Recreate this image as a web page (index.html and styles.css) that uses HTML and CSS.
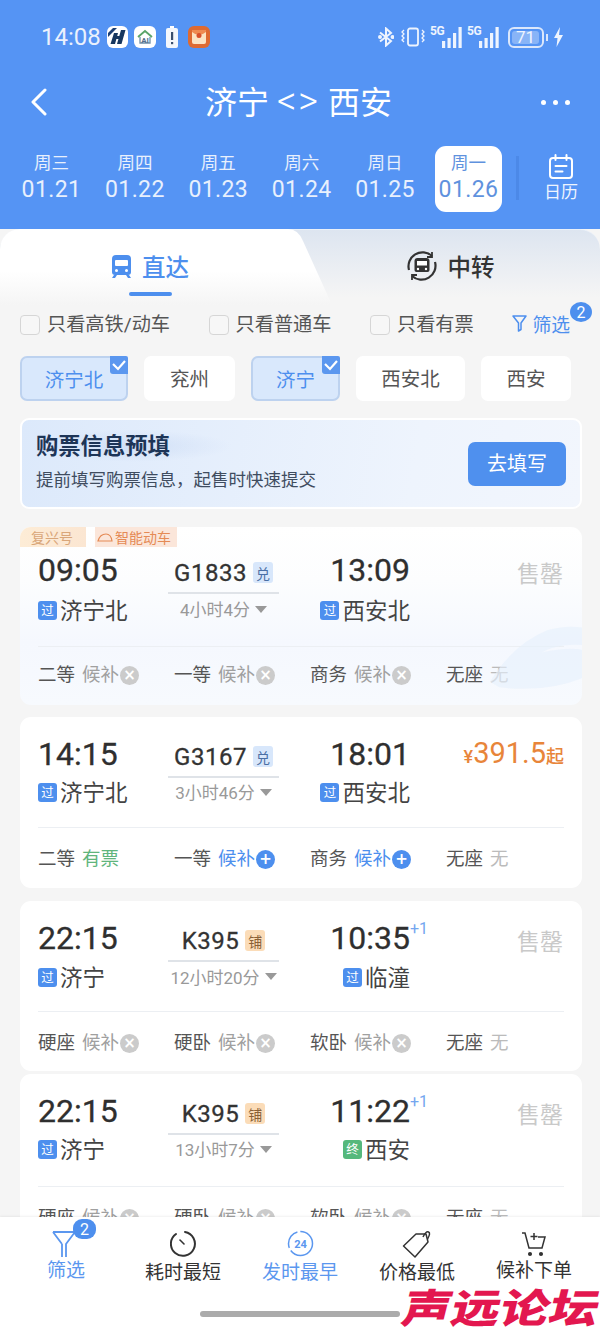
FILE: index.html
```html
<!DOCTYPE html>
<html lang="zh-CN">
<head>
<meta charset="utf-8">
<title>济宁 &lt;&gt; 西安</title>
<link rel="stylesheet" href="styles.css">
</head>
<body>
<div class="app">
  <header class="header">
    <div class="status">
      <span class="clock">14:08</span>
      <svg class="app-icon" width="21" height="22" viewBox="0 0 21 22"><rect width="21" height="22" rx="6" fill="#fff"/><path d="M1 7 6 2h4L1 11z" fill="#1c3f73"/><path d="M7 7h4l-3 11H3.500zM14 4h4.500l-4 14H10z" fill="#17375f"/><path d="M6 10h10v3H6z" fill="#17375f"/></svg>
      <svg class="app-icon" width="22" height="22" viewBox="0 0 22 22"><rect width="22" height="22" rx="6" fill="#fff"/><path d="M4 11 11 5l7 6" fill="none" stroke="#5aa469" stroke-width="1.800"/><path d="M6 11v6h10v-6" fill="none" stroke="#6f8fa8" stroke-width="1.300"/><text x="11" y="16.500" class="app-icon-text">AI</text></svg>
      <svg class="app-icon app-icon--wide" width="12" height="22" viewBox="0 0 12 22"><rect x="4" y="0" width="4" height="2" fill="#fff"/><rect y="2" width="12" height="20" rx="2" fill="#f4f7fc"/><rect x="5" y="6" width="2.200" height="8" fill="#3a4f6e"/><rect x="5" y="16" width="2.200" height="2.200" fill="#3a4f6e"/></svg>
      <svg class="app-icon app-icon--wide" width="22" height="22" viewBox="0 0 22 22"><rect width="22" height="22" rx="6" fill="#de6a32"/><rect x="4" y="4" width="14" height="14" rx="2" fill="#fbe3c4"/><path d="M4 6q7 6 14 0V5a1 1 0 0 0-1-1H5a1 1 0 0 0-1 1z" fill="#ef8b52"/><circle cx="11" cy="9.500" r="2.500" fill="#d8502c"/></svg>
      <span class="status-right">
        <svg width="16" height="20" viewBox="0 0 16 20" fill="none" stroke="#eef4fe" stroke-width="2"><path d="M2 5.500 13 14l-5 4.500V1.500L13 6 2 14.500"/><circle cx="2" cy="10" r="1" fill="#eef4fe"/><circle cx="14.500" cy="10" r="1" fill="#eef4fe"/></svg>
        <svg class="vib" width="24" height="20" viewBox="0 0 24 20" fill="none" stroke="#eef4fe" stroke-width="1.800"><rect x="7" y="1.500" width="10" height="17" rx="2"/><path d="M3 3l-2 2 2 2-2 2 2 2-2 2 2 2M21 3l2 2-2 2 2 2-2 2 2 2-2 2" stroke-width="1.300"/></svg>
        <span class="signal"><span class="signal-tag">5G</span><svg width="20" height="21" viewBox="0 0 20 21" fill="#eef4fe"><rect x="0" y="14" width="3.200" height="7"/><rect x="5.500" y="11" width="3.200" height="10"/><rect x="11" y="6" width="3.200" height="15"/><rect x="16.500" y="0" width="3.200" height="21"/></svg></span>
        <span class="signal"><span class="signal-tag">5G</span><svg width="20" height="21" viewBox="0 0 20 21" fill="#eef4fe"><rect x="0" y="14" width="3.200" height="7"/><rect x="5.500" y="11" width="3.200" height="10"/><rect x="11" y="6" width="3.200" height="15"/><rect x="16.500" y="0" width="3.200" height="21"/></svg></span>
        <span class="battery"><span class="battery-level">71</span></span>
        <span class="battery-tip"></span>
        <svg width="9" height="20" viewBox="0 0 9 20"><path d="M6 0 0 11h3.500L2.500 20 9 8H5z" fill="#eef4fe"/></svg>
      </span>
    </div>
    <div class="nav">
      <svg class="nav-back" width="18" height="28" viewBox="0 0 18 28"><path d="M15 2 3 14l12 12" fill="none" stroke="#fff" stroke-width="3" stroke-linecap="round" stroke-linejoin="round"/></svg>
      <h1 class="nav-title">济宁 <span class="nav-arrows">&lt;&gt;</span> 西安</h1>
      <span class="nav-more"><i></i><i></i><i></i></span>
    </div>
    <div class="dates">
      <div class="day"><span class="day-week">周三</span><span class="day-date">01.21</span></div>
      <div class="day"><span class="day-week">周四</span><span class="day-date">01.22</span></div>
      <div class="day"><span class="day-week">周五</span><span class="day-date">01.23</span></div>
      <div class="day"><span class="day-week">周六</span><span class="day-date">01.24</span></div>
      <div class="day"><span class="day-week">周日</span><span class="day-date">01.25</span></div>
      <div class="day day--active"><span class="day-week">周一</span><span class="day-date">01.26</span></div>
      <i class="dates-sep"></i>
      <div class="calendar">
        <svg width="26" height="25" viewBox="0 0 26 25" fill="none" stroke="#fff" stroke-width="2"><rect x="2" y="4" width="22" height="20" rx="3"/><path d="M7.500 1v5M18.500 1v5M7.500 12h11M7.500 17.500h7" stroke-linecap="round"/></svg>
        <span>日历</span>
      </div>
    </div>
  </header>

  <main class="sheet">
    <div class="tabs">
      <svg class="tab-shape" width="332" height="76" viewBox="0 0 332 76" preserveAspectRatio="none"><defs><linearGradient id="tabFill" x1="0" y1="0" x2="0" y2="1"><stop offset="0" stop-color="#fff"/><stop offset=".55" stop-color="#fff"/><stop offset="1" stop-color="#f5f5f5"/></linearGradient></defs><path d="M0 20Q0 0 20 0H288Q298 0 303 12L332 76H0z" fill="url(#tabFill)"/></svg>
      <div class="tab tab--active">
        <div class="tab-label">
          <svg width="21" height="23" viewBox="0 0 21 23"><path d="M5 0h11a4 4 0 0 1 4 4v13a3 3 0 0 1-3 3H4a3 3 0 0 1-3-3V4a4 4 0 0 1 4-4z" fill="#4d8fee"/><rect x="4" y="5" width="13" height="6" rx="1" fill="#fff"/><circle cx="5.500" cy="15.500" r="1.500" fill="#fff"/><circle cx="15.500" cy="15.500" r="1.500" fill="#fff"/><path d="M3 20 1 23h3l2-3zM18 20l2 3h-3l-2-3z" fill="#4d8fee"/></svg>
          <span>直达</span>
        </div>
        <span class="tab-mark"></span>
      </div>
      <div class="tab">
        <div class="tab-label">
          <svg width="32" height="32" viewBox="0 0 32 32" fill="none"><path d="M3 20A14 14 0 0 1 26 6M29 12A14 14 0 0 1 6 26" stroke="#333" stroke-width="2.200"/><path d="M26 2v5h-5M6 30v-5h5" stroke="#333" stroke-width="1.800"/><path d="M11.500 8h9a3 3 0 0 1 3 3v9a2 2 0 0 1-2 2h-11a2 2 0 0 1-2-2v-9a3 3 0 0 1 3-3z" fill="#333"/><rect x="11" y="11" width="10" height="4.500" fill="#fff"/><circle cx="12" cy="19" r="1.200" fill="#fff"/><circle cx="20" cy="19" r="1.200" fill="#fff"/></svg>
          <span>中转</span>
        </div>
      </div>
    </div>

    <div class="checks">
      <label class="check"><i class="check-box"></i>只看高铁/动车</label>
      <label class="check"><i class="check-box"></i>只看普通车</label>
      <label class="check"><i class="check-box"></i>只看有票</label>
      <div class="filter-link">
        <svg width="15" height="17" viewBox="0 0 15 17" fill="none" stroke="#4d8fee" stroke-width="1.500"><path d="M1 1h13L9 8v6.500L6.500 16V8z" stroke-linejoin="round"/></svg>
        <span>筛选</span>
        <b class="count count--filter">2</b>
      </div>
    </div>

    <div class="chips">
      <div class="chip chip--on chip--w108">济宁北<svg class="chip-tick" width="18" height="18" viewBox="0 0 18 18"><path d="M0 0h16a2 2 0 0 1 2 2v16H3a3 3 0 0 1-3-3z" fill="#5b97ef"/><path d="M3 8l5 5 7-8" fill="none" stroke="#fff" stroke-width="2.200"/></svg></div>
      <div class="chip chip--w91">兖州</div>
      <div class="chip chip--on chip--w89">济宁<svg class="chip-tick" width="18" height="18" viewBox="0 0 18 18"><path d="M0 0h16a2 2 0 0 1 2 2v16H3a3 3 0 0 1-3-3z" fill="#5b97ef"/><path d="M3 8l5 5 7-8" fill="none" stroke="#fff" stroke-width="2.200"/></svg></div>
      <div class="chip chip--w109">西安北</div>
      <div class="chip chip--w90">西安</div>
    </div>

    <section class="prefill">
      <div class="prefill-text">
        <h2>购票信息预填</h2>
        <p>提前填写购票信息，起售时快速提交</p>
      </div>
      <button class="prefill-btn">去填写</button>
    </section>

    <div class="trains">
      <article class="card card--first">
        <svg class="card-wave" width="92" height="66" viewBox="0 0 100 70"><path d="M0 62Q24 22 62 6Q82 0 100 3V22Q74 20 56 30Q84 24 100 27V58Q60 74 10 68z" fill="#e6f0fb" opacity=".6"/></svg>
        <span class="tag tag--fx">复兴号</span>
        <span class="tag tag--smart"><svg width="16" height="9" viewBox="0 0 16 9"><path d="M1 8Q3 1 9 1q5 0 6 7zM1 8h14" fill="none" stroke="#e58a55" stroke-width="1.200"/></svg>智能动车</span>
        <div class="route">
          <div class="time">09:05</div>
          <div class="mid">
            <div class="train-no">G1833<b class="kind kind--blue">兑</b></div>
            <div class="duration">4小时4分<i class="caret"></i></div>
          </div>
          <div class="time time--arr">13:09</div>
          <div class="side"><span class="soldout">售罄</span></div>
          <div class="station"><b class="stop stop--pass">过</b>济宁北</div>
          <div class="station station--arr"><b class="stop stop--pass">过</b>西安北</div>
        </div>
        <div class="seats">
          <div class="seat">二等<span class="avail">候补</span><i class="mark mark--off">×</i></div>
          <div class="seat">一等<span class="avail">候补</span><i class="mark mark--off">×</i></div>
          <div class="seat">商务<span class="avail">候补</span><i class="mark mark--off">×</i></div>
          <div class="seat">无座<span class="avail avail--none">无</span></div>
        </div>
      </article>

      <article class="card">
        <div class="route">
          <div class="time">14:15</div>
          <div class="mid">
            <div class="train-no">G3167<b class="kind kind--blue">兑</b></div>
            <div class="duration">3小时46分<i class="caret"></i></div>
          </div>
          <div class="time time--arr">18:01</div>
          <div class="side"><span class="price"><small>¥</small>391.5<small>起</small></span></div>
          <div class="station"><b class="stop stop--pass">过</b>济宁北</div>
          <div class="station station--arr"><b class="stop stop--pass">过</b>西安北</div>
        </div>
        <div class="seats">
          <div class="seat">二等<span class="avail avail--ok">有票</span></div>
          <div class="seat">一等<span class="avail avail--wait">候补</span><i class="mark mark--on">+</i></div>
          <div class="seat">商务<span class="avail avail--wait">候补</span><i class="mark mark--on">+</i></div>
          <div class="seat">无座<span class="avail avail--none">无</span></div>
        </div>
      </article>

      <article class="card card--sleeper">
        <div class="route">
          <div class="time">22:15</div>
          <div class="mid">
            <div class="train-no">K395<b class="kind kind--orange">铺</b></div>
            <div class="duration">12小时20分<i class="caret"></i></div>
          </div>
          <div class="time time--arr">10:35<sup class="next-day">+1</sup></div>
          <div class="side"><span class="soldout">售罄</span></div>
          <div class="station"><b class="stop stop--pass">过</b>济宁</div>
          <div class="station station--arr"><b class="stop stop--pass">过</b>临潼</div>
        </div>
        <div class="seats">
          <div class="seat">硬座<span class="avail">候补</span><i class="mark mark--off">×</i></div>
          <div class="seat">硬卧<span class="avail">候补</span><i class="mark mark--off">×</i></div>
          <div class="seat">软卧<span class="avail">候补</span><i class="mark mark--off">×</i></div>
          <div class="seat">无座<span class="avail avail--none">无</span></div>
        </div>
      </article>

      <article class="card card--tight">
        <div class="route">
          <div class="time">22:15</div>
          <div class="mid">
            <div class="train-no">K395<b class="kind kind--orange">铺</b></div>
            <div class="duration">13小时7分<i class="caret"></i></div>
          </div>
          <div class="time time--arr">11:22<sup class="next-day">+1</sup></div>
          <div class="side"><span class="soldout">售罄</span></div>
          <div class="station"><b class="stop stop--pass">过</b>济宁</div>
          <div class="station station--arr"><b class="stop stop--end">终</b>西安</div>
        </div>
        <div class="seats">
          <div class="seat">硬座<span class="avail">候补</span><i class="mark mark--off">×</i></div>
          <div class="seat">硬卧<span class="avail">候补</span><i class="mark mark--off">×</i></div>
          <div class="seat">软卧<span class="avail">候补</span><i class="mark mark--off">×</i></div>
          <div class="seat">无座<span class="avail avail--none">无</span></div>
        </div>
      </article>
    </div>
  </main>

  <footer class="toolbar">
    <div class="tools">
      <div class="tool tool--blue tool--raised">
        <span class="tool-icon">
          <svg width="30" height="28" viewBox="0 0 30 28" fill="none" stroke="#5b97ef" stroke-width="1.800"><path d="M2 2h22L15 14v13M11 14v13M2 2l9 12"/></svg>
          <b class="count count--tool">2</b>
        </span>
        <span class="tool-label">筛选</span>
      </div>
      <div class="tool">
        <span class="tool-icon"><svg width="27" height="27" viewBox="0 0 27 27" fill="none" stroke="#333" stroke-width="2" stroke-linecap="round"><path d="M15 2A12 12 0 1 1 6 4"/><path d="M10 10l4 4" stroke-width="1.600"/></svg></span>
        <span class="tool-label">耗时最短</span>
      </div>
      <div class="tool tool--blue">
        <span class="tool-icon"><svg width="27" height="27" viewBox="0 0 27 27" fill="none"><circle cx="13.500" cy="13.500" r="12" stroke="#5b97ef" stroke-width="1.500" stroke-dasharray="30 3 20 3"/><text x="13.500" y="17.500" class="tool-24">24</text></svg></span>
        <span class="tool-label">发时最早</span>
      </div>
      <div class="tool">
        <span class="tool-icon"><svg width="30" height="30" viewBox="0 0 30 30" fill="none" stroke="#333" stroke-width="1.500" stroke-linejoin="round"><path d="M1.500 17 14 5h10l2 8-13 15z"/><path d="M21 8q3-6 5.500-5t-1 7" /></svg></span>
        <span class="tool-label">价格最低</span>
      </div>
      <div class="tool tool--raised">
        <span class="tool-icon"><svg width="26" height="26" viewBox="0 0 26 26" fill="none" stroke="#333" stroke-width="1.500"><path d="M1 2h3l4 15h13l3-11h-7"/><path d="M13 2v7M9.500 5.500h7"/><circle cx="9" cy="23" r="1.300" fill="#333"/><circle cx="20" cy="23" r="1.300" fill="#333"/></svg></span>
        <span class="tool-label">候补下单</span>
      </div>
    </div>
    <span class="home-bar"></span>
  </footer>

  <div class="brand">声远论坛</div>
</div>
</body>
</html>
```
FILE: styles.css
```css
* { box-sizing: border-box; }

html, body { margin: 0; padding: 0; }

body {
  font-family: Roboto, "Noto Sans CJK SC", sans-serif;
  color: #333;
  background: #f5f5f5;
}

.app {
  position: relative;
  display: flex;
  flex-direction: column;
  width: 600px;
  height: 1332px;
  overflow: hidden;
}

/* Blue header */
.header {
  flex: none;
  height: 229px;
  padding-top: 24px;
  background: #5594f4;
  color: #fff;
}

.status {
  display: flex;
  align-items: center;
  height: 26px;
  padding-left: 41px;
}

.clock {
  width: 66px;
  font-size: 24px;
  font-weight: 400;
  color: #eaf1fd;
}

.app-icon { margin-right: 6px; flex: none; }
.app-icon--wide { margin-left: 4px; margin-right: 6px; }

.app-icon-text {
  font-family: Roboto, sans-serif;
  font-size: 8px;
  font-weight: 700;
  text-anchor: middle;
  fill: #54708c;
}

.status-right {
  display: flex;
  align-items: center;
  margin-left: auto;
  padding-right: 37px;
}

.vib { margin-left: 7px; }

.signal {
  position: relative;
  display: flex;
  align-items: flex-end;
  justify-content: flex-end;
  width: 33px;
  height: 22px;
  margin-left: 4px;
}

.signal-tag {
  position: absolute;
  left: 1px;
  top: -1px;
  font-size: 12px;
  font-weight: 700;
  letter-spacing: -.5px;
  line-height: 13px;
  color: #eef4fe;
}

.battery {
  display: flex;
  align-items: stretch;
  width: 36px;
  height: 21px;
  margin-left: 9px;
  padding: 2px;
  border: 2px solid #dbe7fb;
  border-radius: 6px;
}

.battery-level {
  width: 27px;
  border-radius: 3px;
  background: rgba(255, 255, 255, .3);
  font-size: 17px;
  font-weight: 400;
  line-height: 13px;
  text-align: center;
  color: #eef4fe;
}

.battery-tip {
  width: 2px;
  height: 7px;
  margin: 0 6px 0 2px;
  background: #dbe7fb;
}

.nav {
  display: flex;
  align-items: center;
  justify-content: space-between;
  height: 44px;
  margin-top: 30px;
  padding: 0 30px;
}

.nav-title {
  margin: 0 0 0 8px;
  font-size: 32px;
  font-weight: 400;
  line-height: 44px;
  white-space: nowrap;
}

.nav-arrows {
  font-size: 38px;
  font-weight: 300;
  line-height: 44px;
  letter-spacing: 2px;
}

.nav-more { display: flex; gap: 7px; }

.nav-more i {
  width: 5px;
  height: 5px;
  border-radius: 50%;
  background: #fff;
}

.dates {
  display: flex;
  height: 66px;
  margin-top: 22px;
  padding-left: 18px;
  gap: 16.4px;
}

.day {
  display: flex;
  flex: none;
  flex-direction: column;
  align-items: center;
  width: 67px;
  padding-top: 4px;
  border-radius: 11px;
  color: #e8f0fd;
}

.day-week { font-size: 17.5px; line-height: 26px; }

.day-date {
  font-size: 23px;
  line-height: 28px;
  letter-spacing: .4px;
}

.day--active { background: #fff; color: #5f92de; }

.dates-sep {
  flex: none;
  width: 3px;
  height: 44px;
  margin: 10px 0 0 -2px;
  background: rgba(72, 132, 226, .7);
}

.calendar {
  display: flex;
  flex-direction: column;
  align-items: center;
  margin-left: auto;
  padding: 8px 22px 0 0;
  font-size: 17px;
  line-height: 24px;
  color: #eef4fe;
}

.calendar span { margin-top: 1px; }

/* Sheet under the header */
.sheet {
  flex: 1;
  min-height: 0;
  overflow: hidden;
  border-radius: 20px 20px 0 0;
  background: #f5f5f5;
}

.tabs {
  position: relative;
  display: flex;
  height: 76px;
  border-radius: 20px 20px 0 0;
  border-top: 1px solid #eaf0f9;
  background: linear-gradient(#dde5f0, #f5f5f5 90%);
}

.tab-shape {
  position: absolute;
  left: 0;
  top: -1px;
}

.tab {
  position: relative;
  display: flex;
  flex-direction: column;
  align-items: center;
  width: 300px;
  padding-top: 22px;
}

.tab-label {
  display: flex;
  align-items: center;
  gap: 10px;
  height: 28px;
  font-size: 23.500px;
  font-weight: 500;
  color: #333;
}

.tab--active .tab-label { color: #4d8fee; }

.tab-mark {
  width: 43px;
  height: 4px;
  margin-top: 12px;
  border-radius: 2px;
  background: #4d8fee;
}

.checks {
  display: flex;
  align-items: center;
  gap: 38.500px;
  height: 40px;
  padding: 0 30px 0 20px;
}

.check {
  display: flex;
  align-items: center;
  gap: 7px;
  padding-bottom: 4px;
  font-size: 19.200px;
  color: #555;
  white-space: nowrap;
}

.check-box {
  width: 20px;
  height: 20px;
  margin-top: 4px;
  border: 1.500px solid #d6d6d6;
  border-radius: 4px;
  background: #f7f7f7;
}

.filter-link {
  position: relative;
  display: flex;
  align-items: center;
  gap: 5px;
  margin-left: auto;
  padding-bottom: 3px;
  font-size: 18.800px;
  color: #4d8fee;
  white-space: nowrap;
}

.count {
  position: absolute;
  display: flex;
  align-items: center;
  justify-content: center;
  border-radius: 50%;
  background: #4d8fee;
  color: #fff;
  font-weight: 400;
}

.count--filter {
  right: -22px;
  top: -8px;
  width: 22px;
  height: 20px;
  font-size: 16px;
}

.chips {
  display: flex;
  gap: 16px;
  margin-top: 11px;
  padding-left: 20px;
}

.chip {
  position: relative;
  display: flex;
  align-items: center;
  justify-content: center;
  height: 45px;
  padding-bottom: 3px;
  border-radius: 7px;
  background: #fff;
  font-size: 19.500px;
  color: #555;
}

.chip--w108 { width: 108px; }
.chip--w91 { width: 91px; }
.chip--w90 { width: 90px; }
.chip--w89 { width: 89px; }
.chip--w109 { width: 109px; }

.chip--on {
  padding-bottom: 1px;
  border: 2px solid #bdd2ef;
  background: #d9e8fc;
  color: #4d8fee;
}

.chip-tick {
  position: absolute;
  right: -2px;
  top: -2px;
}

.prefill {
  display: flex;
  align-items: center;
  justify-content: space-between;
  height: 91px;
  margin: 17px 18px 0 20px;
  padding: 0 14px;
  border: 2px solid #fff;
  border-radius: 9px;
  background:
    radial-gradient(ellipse 100px 16px at 110px 26px, rgba(178, 200, 236, .35), transparent),
    linear-gradient(100deg, #dce9fb, #eef4fd 70%, #f2f6fd);
}

.prefill-text { padding-bottom: 3px; }

.prefill h2 {
  margin: 0;
  font-size: 22.300px;
  font-weight: 700;
  line-height: 30px;
  color: #1d3557;
}

.prefill p {
  margin: 6px 0 0;
  font-size: 17.500px;
  line-height: 26px;
  color: #3f4c5f;
}

.prefill-btn {
  width: 98px;
  height: 44px;
  padding: 0 0 3px;
  border: 0;
  border-radius: 7px;
  background: #4f90ee;
  font-family: inherit;
  font-size: 20px;
  color: #fff;
}

/* Train cards */
.trains {
  display: flex;
  flex-direction: column;
  gap: 12px;
  margin: 18px 18px 0 20px;
}

.card {
  position: relative;
  overflow: hidden;
  flex: none;
  padding: 17px 18px 15px;
  border-radius: 11px;
  background: #fff;
}

.card--first {
  padding-top: 23px;
  padding-bottom: 13px;
  background: linear-gradient(#fff, #fcfdfe 30%, #f5f8fe 65%, #f7fafe);
}

.card--first .route { row-gap: 7px; }
.card--first .seats { margin-top: 21px; padding-top: 12px; }

.card--sleeper {
  margin-top: 1px;
  padding-bottom: 14px;
}

.card--sleeper .route { row-gap: 6px; }
.card--sleeper .seats { margin-top: 19px; }

.card--tight { margin-top: -9px; }
.card--tight .seats { margin-top: 22px; }

.card-wave {
  position: absolute;
  right: 0;
  bottom: 15px;
}

.tag {
  position: absolute;
  top: 0;
  display: flex;
  align-items: center;
  height: 20px;
  font-size: 14px;
  color: #d9a679;
}

.tag--fx {
  left: 0;
  width: 66px;
  padding-left: 11px;
  background: linear-gradient(90deg, #fdecd6, #fbe6d2);
}

.tag--smart {
  left: 75px;
  width: 82px;
  padding-left: 2px;
  gap: 2px;
  background: #fbe6da;
  color: #e58a55;
}

.route {
  position: relative;
  display: grid;
  grid-template-columns: 130px 111px 131px 1fr;
  grid-template-rows: 40px 28px;
  row-gap: 5px;
}

.time {
  font-size: 32px;
  font-weight: 400;
  line-height: 40px;
  color: #2f2f2f;
  -webkit-text-stroke: .3px #2f2f2f;
  white-space: nowrap;
}

.time--arr {
  position: relative;
  text-align: right;
}

.next-day {
  position: absolute;
  left: 100%;
  top: 2px;
  font-size: 16px;
  font-weight: 400;
  line-height: 18px;
  -webkit-text-stroke: 0;
  color: #74a6ef;
}

.mid {
  grid-row: 1 / 3;
  grid-column: 2;
  display: flex;
  flex-direction: column;
  align-items: center;
}

.train-no {
  display: flex;
  align-items: center;
  justify-content: center;
  gap: 6px;
  align-self: stretch;
  height: 44px;
  padding-top: 3px;
  border-bottom: 2px solid #dfe3e8;
  font-size: 24px;
  font-weight: 400;
  letter-spacing: .5px;
  -webkit-text-stroke: .3px #333;
  color: #333;
}

.kind {
  display: flex;
  align-items: center;
  justify-content: center;
  width: 20px;
  height: 21px;
  border-radius: 3px;
  font-size: 14px;
  font-weight: 400;
  letter-spacing: 0;
  -webkit-text-stroke: 0;
}

.kind--blue { background: #d8e7fb; color: #4a6fa5; }
.kind--orange { background: #fbdcb8; color: #8a6136; }

.duration {
  display: flex;
  flex: 1;
  align-items: center;
  gap: 5px;
  padding-bottom: 2px;
  font-size: 17px;
  color: #999;
}

.caret {
  width: 0;
  height: 0;
  margin-top: 1px;
  border-left: 6px solid transparent;
  border-right: 6px solid transparent;
  border-top: 7px solid #999;
}

.side {
  display: flex;
  align-items: center;
  justify-content: flex-end;
  padding-top: 3px;
}

.soldout { font-size: 23px; color: #c9c9c9; padding-right: 1px; }

.price {
  margin-top: -5px;
  font-size: 29px;
  font-weight: 400;
  color: #e8853a;
  white-space: nowrap;
}

.price small { font-size: 18px; font-weight: 500; }

.station {
  display: flex;
  align-items: center;
  gap: 3px;
  grid-column: 1;
  padding-bottom: 1px;
  font-size: 22.500px;
  line-height: 28px;
  color: #444;
  white-space: nowrap;
}

.station--arr {
  grid-column: 3;
  justify-content: flex-end;
}

.stop {
  display: flex;
  align-items: center;
  justify-content: center;
  width: 19px;
  height: 19px;
  border-radius: 3px;
  font-size: 12.500px;
  font-weight: 400;
  color: #fff;
}

.stop--pass { background: #4d8fee; }
.stop--end { background: #55b87c; }

.seats {
  display: grid;
  grid-template-columns: repeat(4, 136px);
  height: 46px;
  margin-top: 20px;
  padding-top: 15px;
  border-top: 1px solid #eceff3;
}

.seat {
  display: flex;
  align-items: center;
  height: 30px;
  padding-bottom: 2px;
  font-size: 18.500px;
  color: #555;
  white-space: nowrap;
}

.avail { margin-left: 7px; color: #a0a0a0; }
.avail--ok { color: #5fb57c; }
.avail--wait { color: #4d8fee; }
.avail--none { color: #bbb; }

.mark {
  display: flex;
  align-items: center;
  justify-content: center;
  width: 19px;
  height: 19px;
  margin: 4px 0 0 1px;
  border-radius: 50%;
  font-family: "DejaVu Sans", sans-serif;
  font-size: 15px;
  font-style: normal;
  font-weight: 700;
  color: #fff;
}

.mark--off { background: #cbcbcb; }
.mark--on { background: #4d8fee; }

/* Bottom sort bar */
.toolbar {
  position: relative;
  display: flex;
  flex: none;
  flex-direction: column;
  align-items: center;
  height: 115px;
  background: #fff;
  box-shadow: 0 -1px 2px rgba(0, 0, 0, .06);
}

.tools {
  display: grid;
  grid-template-columns: repeat(5, 117px);
  width: 585px;
  padding-top: 13px;
}

.tool {
  display: flex;
  flex-direction: column;
  align-items: center;
  color: #333;
}

.tool-icon {
  position: relative;
  display: flex;
  align-items: center;
  justify-content: center;
  height: 27px;
}

.tool-label {
  margin-top: 4px;
  font-size: 19px;
  line-height: 24px;
  white-space: nowrap;
}

.tool--raised .tool-label { margin-top: 2px; }
.tool--blue { color: #5b97ef; }

.tool-24 {
  font-family: Roboto, sans-serif;
  font-size: 11px;
  font-weight: 700;
  text-anchor: middle;
  fill: #5b97ef;
}

.count--tool {
  right: -15px;
  top: -11px;
  width: 23px;
  height: 20px;
  border-radius: 9px;
  font-size: 16px;
}

.home-bar {
  width: 200px;
  height: 6px;
  margin-top: auto;
  margin-bottom: 15px;
  border-radius: 3px;
  background: #ababab;
}

.brand {
  position: absolute;
  right: 6px;
  bottom: 3px;
  width: 196px;
  font-size: 49px;
  font-weight: 900;
  line-height: 46px;
  white-space: nowrap;
  color: #e3174f;
  transform: skewX(-14deg) scaleY(.82);
  transform-origin: center bottom;
}
```
